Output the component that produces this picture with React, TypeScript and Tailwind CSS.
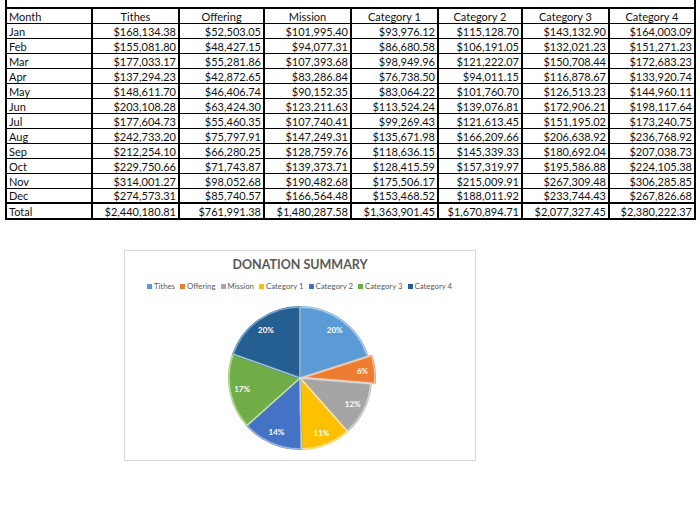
import React from "react";

const rows: string[][] = [
  ["Jan", "$168,134.38", "$52,503.05", "$101,995.40", "$93,976.12", "$115,128.70", "$143,132.90", "$164,003.09"],
  ["Feb", "$155,081.80", "$48,427.15", "$94,077.31", "$86,680.58", "$106,191.05", "$132,021.23", "$151,271.23"],
  ["Mar", "$177,033.17", "$55,281.86", "$107,393.68", "$98,949.96", "$121,222.07", "$150,708.44", "$172,683.23"],
  ["Apr", "$137,294.23", "$42,872.65", "$83,286.84", "$76,738.50", "$94,011.15", "$116,878.67", "$133,920.74"],
  ["May", "$148,611.70", "$46,406.74", "$90,152.35", "$83,064.22", "$101,760.70", "$126,513.23", "$144,960.11"],
  ["Jun", "$203,108.28", "$63,424.30", "$123,211.63", "$113,524.24", "$139,076.81", "$172,906.21", "$198,117.64"],
  ["Jul", "$177,604.73", "$55,460.35", "$107,740.41", "$99,269.43", "$121,613.45", "$151,195.02", "$173,240.75"],
  ["Aug", "$242,733.20", "$75,797.91", "$147,249.31", "$135,671.98", "$166,209.66", "$206,638.92", "$236,768.92"],
  ["Sep", "$212,254.10", "$66,280.25", "$128,759.76", "$118,636.15", "$145,339.33", "$180,692.04", "$207,038.73"],
  ["Oct", "$229,750.66", "$71,743.87", "$139,373.71", "$128,415.59", "$157,319.97", "$195,586.88", "$224,105.38"],
  ["Nov", "$314,001.27", "$98,052.68", "$190,482.68", "$175,506.17", "$215,009.91", "$267,309.48", "$306,285.85"],
  ["Dec", "$274,573.31", "$85,740.57", "$166,564.48", "$153,468.52", "$188,011.92", "$233,744.43", "$267,826.68"],
];
const total = ["Total", "$2,440,180.81", "$761,991.38", "$1,480,287.58", "$1,363,901.45", "$1,670,894.71", "$2,077,327.45", "$2,380,222.37"];
const headers = ["Month", "Tithes", "Offering", "Mission", "Category 1", "Category 2", "Category 3", "Category 4"];
const widths = ["w-[86px]", "w-[87px]", "w-[85px]", "w-[87px]", "w-[87px]", "w-[84px]", "w-[87px]", "w-[84px]"];

const series = [
  { name: "Tithes", value: 2440180.81, color: "#5b9bd5", edge: "#7fb2e0", label: "20%" },
  { name: "Offering", value: 761991.38, color: "#ed7d31", edge: "#f29a5e", label: "6%" },
  { name: "Mission", value: 1480287.58, color: "#a5a5a5", edge: "#bdbdbd", label: "12%" },
  { name: "Category 1", value: 1363901.45, color: "#ffc000", edge: "#ffd04d", label: "11%" },
  { name: "Category 2", value: 1670894.71, color: "#4472c4", edge: "#6a8fd2", label: "14%" },
  { name: "Category 3", value: 2077327.45, color: "#70ad47", edge: "#8fc46b", label: "17%" },
  { name: "Category 4", value: 2380222.37, color: "#255e91", edge: "#3f78aa", label: "20%" },
];

function Row({ cells, header, last, bottom }: { cells: string[]; header?: boolean; last?: boolean; bottom: string }) {
  return (
    <div className={`flex ${bottom}`}>
      {cells.map((c, i) => (
        <div
          key={i}
          className={`${widths[i]} ${i < 7 ? "border-r-2 border-black" : ""} flex items-center px-[2px] leading-none whitespace-nowrap ${
            i === 0 ? "justify-start" : header ? "justify-center" : "justify-end"
          } ${last ? "h-[13px]" : "h-[14px]"}`}
        >
          {c}
        </div>
      ))}
    </div>
  );
}

function Pie() {
  const cx = 80;
  const cy = 80;
  const r = 71;
  const sum = series.reduce((s, x) => s + x.value, 0);
  let acc = 0;
  const pt = (a: number, rad: number, ox = 0, oy = 0) => [cx + ox + rad * Math.sin(a), cy + oy - rad * Math.cos(a)];
  const slices = series.map((s, i) => {
    const a0 = (acc / sum) * Math.PI * 2;
    acc += s.value;
    const a1 = (acc / sum) * Math.PI * 2;
    const mid = (a0 + a1) / 2;
    const ex = i === 1 ? 4 : 0;
    const ox = ex * Math.sin(mid);
    const oy = -ex * Math.cos(mid);
    const [x0, y0] = pt(a0, r, ox, oy);
    const [x1, y1] = pt(a1, r, ox, oy);
    const large = a1 - a0 > Math.PI ? 1 : 0;
    const d = `M ${cx + ox} ${cy + oy} L ${x0} ${y0} A ${r} ${r} 0 ${large} 1 ${x1} ${y1} Z`;
    const [lx, ly] = pt(mid, 59, ox, oy);
    return { d, s, lx, ly };
  });
  return (
    <svg width="160" height="160" viewBox="0 0 160 160">
      {slices.map(({ d, s }, i) => (
        <path key={i} d={d} fill={s.color} />
      ))}
      {slices.map(({ d, s }, i) => (
        <path key={"e" + i} d={d} fill="none" stroke={s.edge} strokeWidth={2} strokeLinejoin="round" />
      ))}
      {slices.map(({ d }, i) => (
        <path key={"w" + i} d={d} fill="none" stroke="#ffffff" strokeWidth={0.6} strokeOpacity={0.7} />
      ))}
      {slices.map(({ s, lx, ly }, i) => (
        <text
          key={"t" + i}
          x={lx}
          y={ly}
          textAnchor="middle"
          dominantBaseline="central"
          fill="#ffffff"
          fontSize="8"
          fontWeight="700"
          fontFamily="Lato, 'Liberation Sans', sans-serif"
        >
          {s.label}
        </text>
      ))}
    </svg>
  );
}

export default function App() {
  return (
    <div className="w-[700px] h-[514px] bg-white text-[#111] font-['Lato','Liberation_Sans',sans-serif] text-[11px] overflow-hidden">
      <div className="pl-[5px]">
        <div className="w-[691px] h-[7px] border-l-2 border-r-2 border-black" />
        <div className="w-[691px] border-2 border-black">
          <Row cells={headers} header bottom="border-b border-black" />
          {rows.map((r, i) => (
            <Row key={i} cells={r} bottom={i === 11 ? "border-b-2 border-black" : "border-b border-black"} last={i === 11} />
          ))}
          <Row cells={total} bottom="" />
        </div>
      </div>
      <div className="ml-[124px] mt-[30px] w-[352px] h-[211px] border border-[#d9d9d9] flex flex-col items-center">
        <div className="mt-[5px] text-[12.5px] font-bold text-[#595959] leading-[18px]">DONATION SUMMARY</div>
        <div className="mt-[7px] flex items-center gap-[4px] text-[7.8px] text-[#595959] leading-[10px]">
          {series.map((s) => (
            <div key={s.name} className="flex items-center gap-[2px] mr-[1px]">
              <span className="inline-block w-[5px] h-[5px]" style={{ backgroundColor: s.color }} />
              <span>{s.name}</span>
            </div>
          ))}
        </div>
        <div className="mt-[7px]">
          <Pie />
        </div>
      </div>
    </div>
  );
}
